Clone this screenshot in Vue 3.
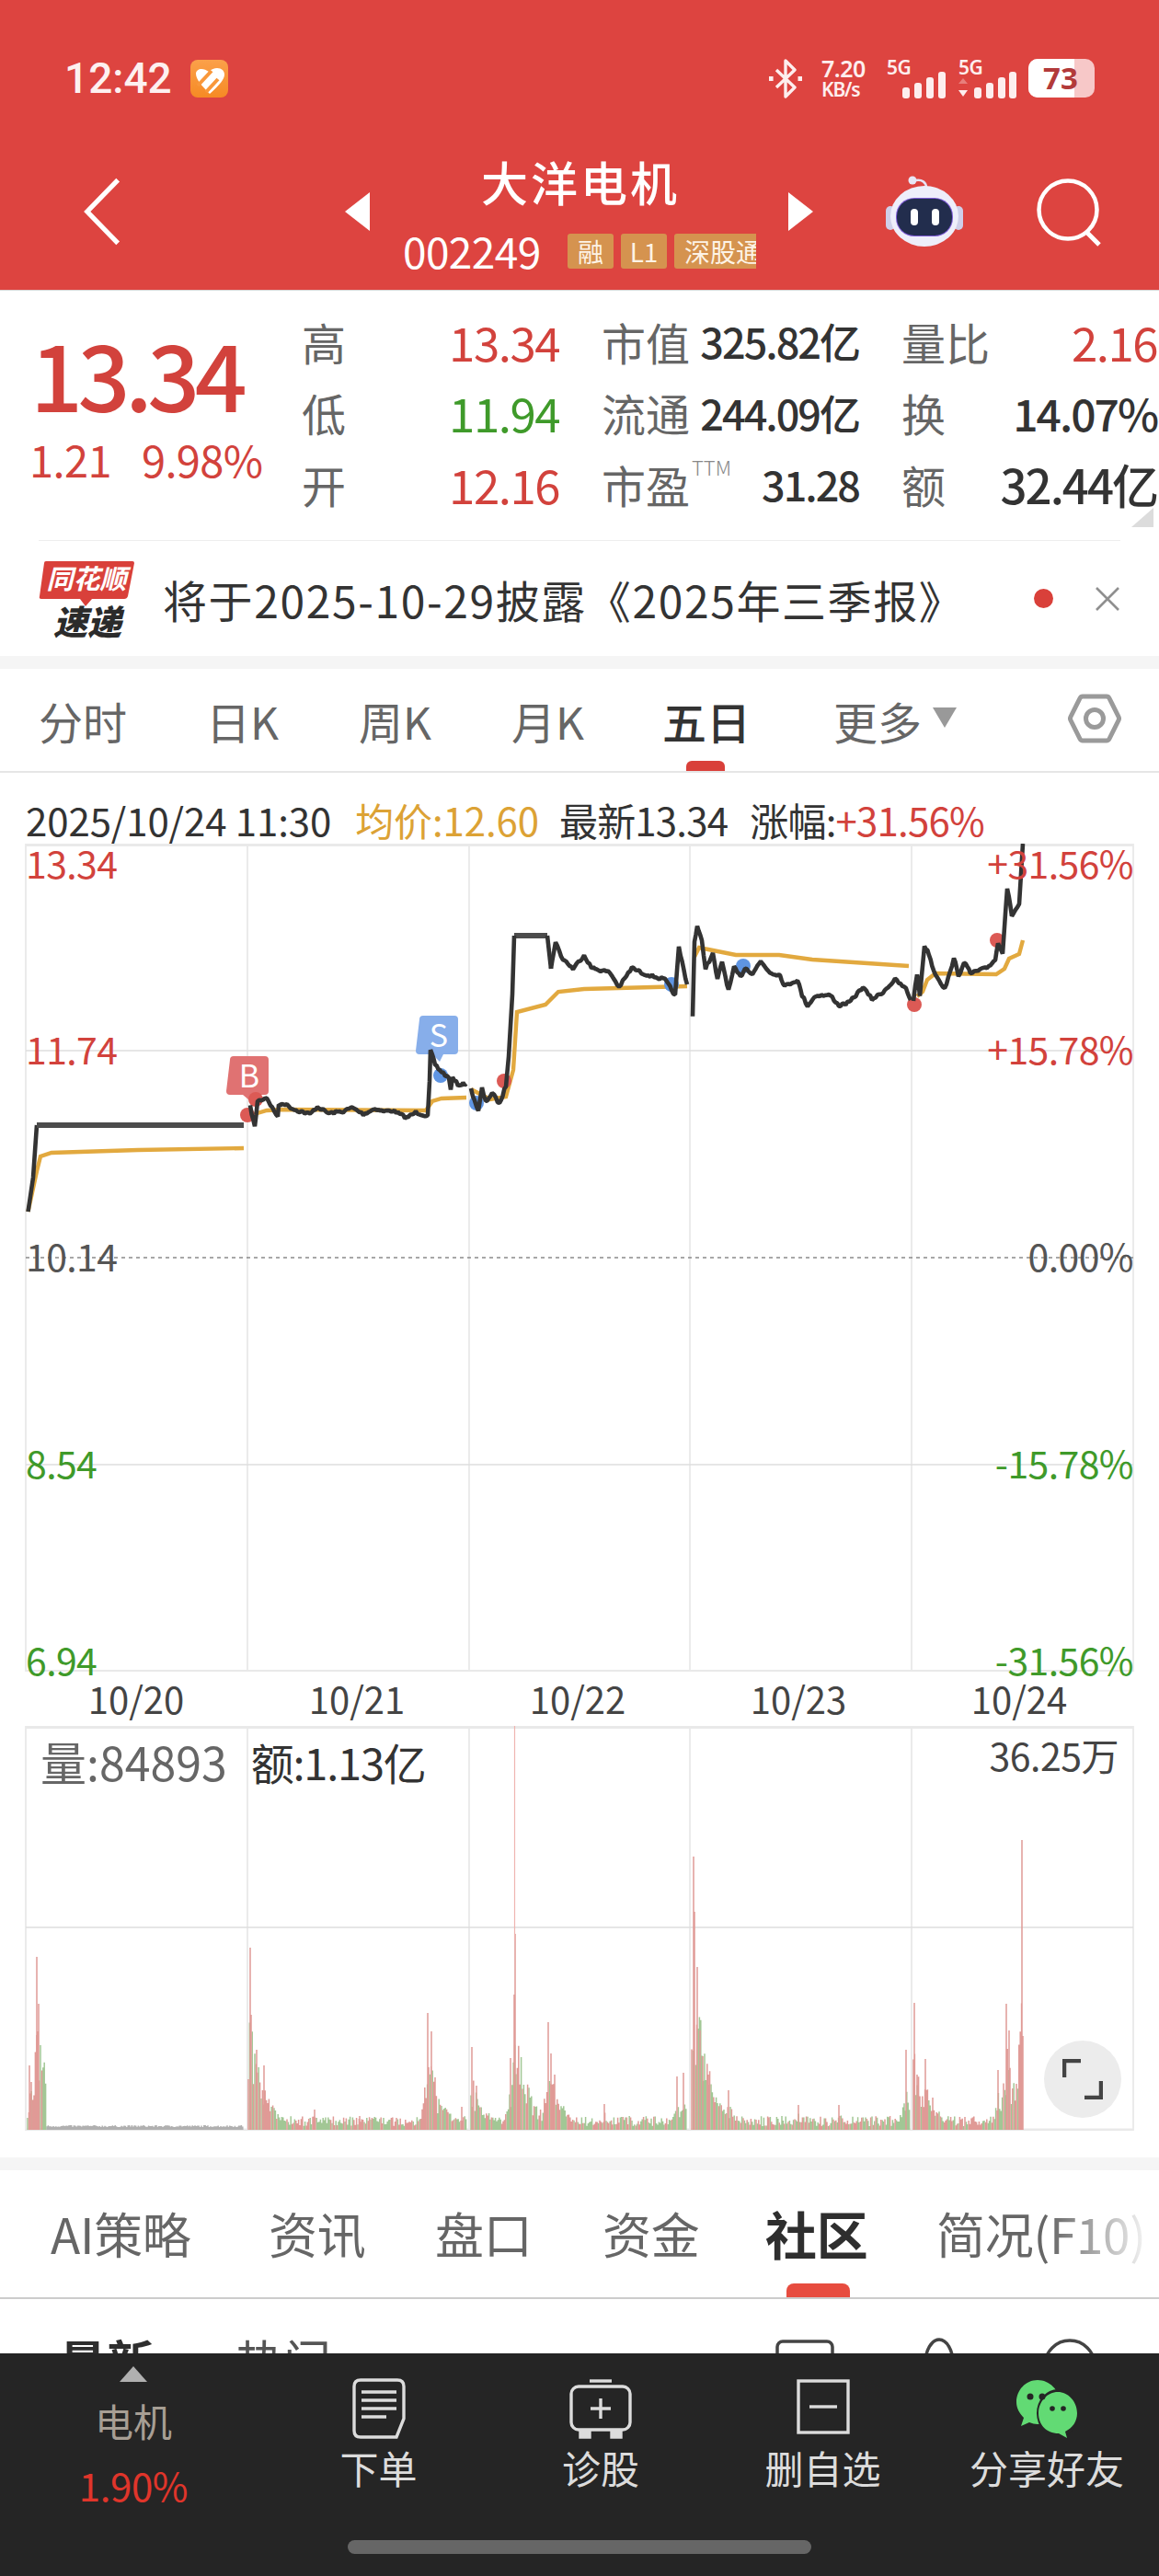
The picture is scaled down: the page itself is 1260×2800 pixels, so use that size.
<script setup>
// seeded noise so the chart looks the same on every render
let seed = 7
function rnd() {
  seed = (seed * 16807) % 2147483647
  return seed / 2147483647
}

function line(points) {
  return 'M' + points.map((p) => p[0].toFixed(1) + ' ' + p[1].toFixed(1)).join('L')
}

// walks between key points and adds a small wobble, like minute ticks
function noisy(points, amp = 1.6) {
  const out = []
  for (let i = 0; i < points.length - 1; i++) {
    const [x0, y0] = points[i]
    const [x1, y1] = points[i + 1]
    const steps = Math.max(1, Math.round((x1 - x0) / 2))
    for (let s = 0; s < steps; s++) {
      const t = s / steps
      out.push([x0 + (x1 - x0) * t, y0 + (y1 - y0) * t + (rnd() - 0.5) * amp * 2])
    }
  }
  out.push(points[points.length - 1])
  return line(out)
}

const priceDays = [
  [[272,1203],[277,1225],[280,1197],[290,1193],[298,1208],[302,1213],[303,1202],[308,1199],[320,1206],[337,1211],[345,1203],[357,1210],[373,1208],[383,1204],[395,1211],[408,1205],[417,1208],[427,1207],[442,1215],[452,1209],[465,1213],[467,1177],[468,1142],[473,1157],[478,1163],[488,1172],[490,1183],[492,1172],[498,1179],[507,1178]],
  [[512,1184],[520,1208],[524,1183],[528,1198],[535,1188],[543,1200],[550,1180],[553,1147],[557,1080],[559,1017]],
  [[599,1053],[604,1023],[610,1040],[623,1053],[635,1038],[643,1052],[663,1057],[673,1073],[687,1052],[699,1058],[723,1065],[734,1082],[738,1030],[747,1070]],
  [[753,1105],[755,1023],[758,1007],[763,1023],[767,1052],[775,1037],[780,1065],[785,1045],[792,1077],[798,1052],[805,1062],[810,1052],[818,1058],[827,1045],[837,1057],[848,1060],[853,1072],[867,1065],[872,1082],[878,1093],[887,1082],[903,1082],[912,1093],[923,1090],[938,1073],[948,1086],[958,1080],[973,1065],[985,1075],[990,1087]],
  [[993,1087],[997,1058],[1000,1082],[1005,1028],[1010,1037],[1015,1055],[1027,1075],[1033,1057],[1037,1040],[1042,1062],[1048,1045],[1055,1058],[1073,1052],[1082,1043],[1085,1025],[1090,1035],[1095,965],[1100,995],[1108,983],[1110,950],[1112,917]]
]
const pricePaths = priceDays.map((d) => noisy(d))

const avgPaths = [
  [[30.5,1317],[40,1273],[44,1257],[56,1253],[150,1250],[265,1248]],
  [[273,1212],[290,1207],[307,1206],[463,1207],[470,1197],[480,1194],[507,1193]],
  [[512,1184],[533,1195],[550,1192],[558,1163],[562,1100],[593,1092],[603,1082],[607,1078],[635,1075],[747,1072]],
  [[755,1040],[760,1030],[770,1032],[800,1038],[847,1038],[883,1043],[988,1050]],
  [[997,1083],[1003,1078],[1008,1065],[1017,1058],[1083,1059],[1092,1053],[1097,1042],[1108,1037],[1112,1022]]
].map(line)

const redDots = [[269,1212],[278,1195],[548,1175],[994,1092],[1084,1022]]
const blueDots = [[479,1169],[518,1199],[730,1070],[808,1050]]

// volume pane: [x, top of the bar]
const volDays = [
  { from: 30, to: 265, flat: 50, spikes: [[32,2245],[34,2263],[40,2127],[42,2178]] },
  { from: 270, to: 507, spikes: [[272,2117],[273,2190],[279,2228],[287,2245],[342,2293],[391,2300],[465,2188],[469,2208],[502,2290]] },
  { from: 512, to: 747, spikes: [[513,2225],[518,2267],[555,2237],[559,2168],[560,2102],[596,2198],[599,2232],[603,2255],[657,2287],[736,2257],[743,2253]] },
  { from: 752, to: 989, spikes: [[754,2018],[755,2078],[758,2138],[761,2207],[764,2235],[770,2255],[792,2272],[868,2288],[912,2288],[985,2228]] },
  { from: 993, to: 1112, spikes: [[994,2177],[997,2255],[1006,2238],[1014,2280],[1085,2250],[1094,2178],[1097,2207],[1105,2265],[1111,2000],[1112,2213]] }
]

const BASE = 2315
const volBars = { red: '', green: '', gray: '' }
for (const day of volDays) {
  for (let x = day.from; x <= day.to; x += 1.4) {
    let h = 4 + rnd() * 11
    if (day.flat && x > day.flat) {
      h = 3 + rnd() * 2
      volBars.gray += `M${x.toFixed(1)} ${BASE}V${(BASE - h).toFixed(1)}`
      continue
    }
    for (const [sx, top] of day.spikes) {
      const dx = x - sx
      const tau = dx > 0 ? 15 : 5
      const v = (BASE - top) * Math.exp(-Math.abs(dx) / tau) * (0.25 + rnd() * 0.45)
      if (v > h) h = v
    }
    const key = rnd() > 0.5 ? 'red' : 'green'
    volBars[key] += `M${x.toFixed(1)} ${BASE}V${(BASE - h).toFixed(1)}`
  }
  for (const [sx, top] of day.spikes) {
    volBars.red += `M${sx} ${BASE}V${top}`
  }
}

const gridX = [28, 269, 510, 750, 991, 1232]

const leftAxis = [
  { text: '13.34', cls: 'up', y: 20 },
  { text: '11.74', cls: 'up', y: 222 },
  { text: '10.14', cls: 'flat', y: 447 },
  { text: '8.54', cls: 'down', y: 672 },
  { text: '6.94', cls: 'down', y: 886 }
]
const rightAxis = [
  { text: '+31.56%', cls: 'up', y: 20 },
  { text: '+15.78%', cls: 'up', y: 222 },
  { text: '0.00%', cls: 'flat', y: 447 },
  { text: '-15.78%', cls: 'down', y: 672 },
  { text: '-31.56%', cls: 'down', y: 886 }
]

const stats = [
  { label: '高', value: '13.34', cls: 'up' },
  { label: '市值', value: '325.82亿', cls: 'dark tight' },
  { label: '量比', value: '2.16', cls: 'up' },
  { label: '低', value: '11.94', cls: 'down' },
  { label: '流通', value: '244.09亿', cls: 'dark tight' },
  { label: '换', value: '14.07%', cls: 'dark narrow' },
  { label: '开', value: '12.16', cls: 'up' },
  { label: '市盈', sup: 'TTM', value: '31.28', cls: 'dark tight' },
  { label: '额', value: '32.44亿', cls: 'dark' }
]

const periods = [
  { name: '分时' },
  { name: '日K' },
  { name: '周K' },
  { name: '月K' },
  { name: '五日', active: true },
  { name: '更多', more: true }
]
const dates = ['10/20', '10/21', '10/22', '10/23', '10/24']
const sections = [
  { name: 'AI策略' },
  { name: '资讯' },
  { name: '盘口' },
  { name: '资金' },
  { name: '社区', active: true },
  { name: '简况(F10)' }
]
</script>

<template>
  <div class="phone">
    <header class="top">
      <div class="status">
        <span class="clock">12:42</span>
        <svg class="app-badge" viewBox="0 0 41 41">
          <defs>
            <linearGradient id="badge" x1="0" y1="0" x2="0" y2="1">
              <stop offset="0" stop-color="#fba04a" />
              <stop offset="1" stop-color="#f68a24" />
            </linearGradient>
          </defs>
          <rect width="41" height="41" rx="8" fill="url(#badge)" />
          <path d="M6 15c0-3 3-5 6-5 3 0 5 1 8 3 3-3 6-4 9-4 5 0 8 3 8 7 0 5-5 11-16 21C12 28 6 21 6 15z" fill="#fff" />
          <path d="M8 28l15-16M17 35l13-14" fill="none" stroke="#f9973a" stroke-width="4" />
        </svg>
        <div class="status-right">
          <svg class="bt" viewBox="0 0 36 43" fill="none" stroke="#fdeeee" stroke-width="3.4">
            <path d="M8 12l20 19-10 10V2l10 10L8 31" stroke-linejoin="round" />
            <path d="M2 21.5h.1M34 21.5h.1" stroke-width="5" stroke-linecap="square" />
          </svg>
          <div class="speed"><span>7.20</span><small>KB/s</small></div>
          <div class="sig">
            <span class="five-g">5G</span>
            <svg width="47" height="29" viewBox="0 0 47 29" fill="#fdeeee">
              <rect x="0" y="17" width="8" height="12" rx="3" />
              <rect x="13" y="12" width="8" height="17" rx="3" />
              <rect x="26" y="6" width="8" height="23" rx="3" />
              <rect x="39" y="0" width="8" height="29" rx="3" />
            </svg>
          </div>
          <div class="sig sig-two">
            <span class="five-g">5G</span>
            <svg width="63" height="29" viewBox="0 0 63 29" fill="#fdeeee">
              <path d="M0 13l5-6 5 6z" opacity=".35" />
              <path d="M0 20l5 7 5-7z" />
              <rect x="17" y="17" width="8" height="12" rx="3" />
              <rect x="30" y="12" width="8" height="17" rx="3" />
              <rect x="43" y="6" width="8" height="23" rx="3" />
              <rect x="55" y="0" width="8" height="29" rx="3" />
            </svg>
          </div>
          <div class="battery">
            <span class="battery-fill" />
            <span class="battery-num">73</span>
          </div>
        </div>
      </div>

      <nav class="title-bar">
        <svg class="back" viewBox="0 0 44 76" fill="none" stroke="#fff" stroke-width="5.5">
          <path d="M40 2L5 38l35 36" />
        </svg>
        <span class="tri tri-left" />
        <div class="stock">
          <div class="stock-name">大洋电机</div>
          <div class="stock-meta">
            <span class="code">002249</span>
            <span class="tag">融</span>
            <span class="tag">L1</span>
            <span class="tag tag-cut">深股通</span>
          </div>
        </div>
        <span class="tri tri-right" />
        <svg class="robot" viewBox="0 0 84 77">
          <path d="M44 13c0-6-5-9-11-8" fill="none" stroke="#e6e3f5" stroke-width="2.5" />
          <circle cx="29" cy="5" r="4.5" fill="#e8e6f6" />
          <rect x="0" y="33" width="10" height="26" rx="5" fill="#cfcfe9" />
          <rect x="74" y="33" width="10" height="26" rx="5" fill="#cfcfe9" />
          <ellipse cx="42" cy="44" rx="37" ry="33" fill="#eeeefa" />
          <rect x="11" y="24" width="62" height="42" rx="20" fill="#7f5cd8" />
          <rect x="12" y="25" width="60" height="40" rx="19" fill="#222d4d" />
          <rect x="27" y="36" width="8" height="18" rx="4" fill="#fff" />
          <rect x="50" y="36" width="8" height="18" rx="4" fill="#fff" />
        </svg>
        <svg class="search" viewBox="0 0 76 76" fill="none" stroke="#fff" stroke-width="4.5">
          <circle cx="34" cy="34" r="31.5" />
          <path d="M55 59l13 13" stroke-width="5" />
        </svg>
      </nav>
    </header>

    <section class="quote">
      <div class="price-box">
        <div class="price">13.34</div>
        <div class="change"><span>1.21</span><span>9.98%</span></div>
      </div>
      <div class="stats">
        <div v-for="s in stats" :key="s.label" class="stat">
          <span class="stat-label">{{ s.label }}<sup v-if="s.sup">{{ s.sup }}</sup></span>
          <span class="stat-value" :class="s.cls">{{ s.value }}</span>
        </div>
      </div>
      <span class="corner" />
    </section>

    <section class="news">
      <svg class="logo" viewBox="0 0 104 86">
        <path d="M8 2h94q2 0 2 2l-7 36q-1 3-4 3H58l-7 8-6-8H3q-3 0-2-3L6 4q0-2 2-2z" fill="#d9403a" />
        <text x="52" y="32" class="logo-top" text-anchor="middle">同花顺</text>
        <text x="53" y="82" class="logo-bottom" text-anchor="middle">速递</text>
      </svg>
      <p class="news-text">将于2025-10-29披露《2025年三季报》</p>
      <span class="news-dot" />
      <svg class="news-close" viewBox="0 0 28 28" fill="none" stroke="#8f8f8f" stroke-width="2.6">
        <path d="M2 2l24 24M26 2L2 26" />
      </svg>
    </section>

    <div class="band" />

    <div class="periods">
      <div v-for="p in periods" :key="p.name" class="period" :class="{ active: p.active }">
        {{ p.name }}
        <span v-if="p.more" class="more-arrow" />
        <span v-if="p.active" class="period-bar" />
      </div>
      <svg class="hex" viewBox="0 0 58 54" fill="none" stroke="#9a9a9a" stroke-width="5">
        <path d="M16 3h26q2 0 3 2l10 20q1 2 0 4L45 49q-1 2-3 2H16q-2 0-3-2L3 29q-1-2 0-4L13 5q1-2 3-2z" />
        <circle cx="29" cy="27" r="9.5" />
      </svg>
    </div>

    <div class="readout">
      <span class="stamp">2025/10/24 11:30</span>
      <span class="avg">均价:12.60</span>
      <span class="latest">最新13.34</span>
      <span class="rise">涨幅:<em>+31.56%</em></span>
    </div>

    <div class="chart">
      <svg class="plot" viewBox="0 917 1260 900">
        <path
          v-for="x in gridX"
          :key="x"
          :d="`M${x} 917V1817`"
          stroke="#e4e4e4"
          stroke-width="1.5"
        />
        <path d="M28 918.5H1232" stroke="#e9e9e9" stroke-width="3" />
        <path d="M28 1142H1232M28 1592H1232" stroke="#dedede" stroke-width="1.5" />
        <path d="M28 1816H1232" stroke="#e9e9e9" stroke-width="2" />
        <path d="M28 1367H1232" stroke="#8a8a8a" stroke-width="1.6" stroke-dasharray="4 4" />

        <g fill="none" stroke="#e2a93f" stroke-width="4.4">
          <path v-for="(d, i) in avgPaths" :key="i" :d="d" />
        </g>

        <path d="M250 1152q0-4 4-4h34q4 0 4 4v34q0 4-4 4h-8l-4 10-12-10h-14q-4 0-4-4z" fill="#e07272" />
        <path d="M456 1108q0-4 4-4h34q4 0 4 4v34q0 4-4 4h-12l-4 8-8-8h-14q-4 0-4-4z" fill="#87aeea" />
        <text x="271" y="1182" class="mark-text" text-anchor="middle">B</text>
        <text x="477" y="1138" class="mark-text" text-anchor="middle">S</text>

        <circle v-for="d in redDots" :key="d[0]" :cx="d[0]" :cy="d[1]" r="8" fill="#dc5a55" />
        <circle v-for="d in blueDots" :key="d[0]" :cx="d[0]" :cy="d[1]" r="8" fill="#5f95e3" />

        <path d="M30.5 1317L36 1280L40 1223" fill="none" stroke="#333" stroke-width="4.6" />
        <path d="M40 1223H265" fill="none" stroke="#4c4c4c" stroke-width="6" />
        <path d="M559 1017H595" fill="none" stroke="#4c4c4c" stroke-width="6" />
        <path d="M595 1017L599 1053" fill="none" stroke="#333" stroke-width="4.6" />
        <g fill="none" stroke="#333" stroke-width="4.6" stroke-linejoin="bevel">
          <path v-for="(d, i) in pricePaths" :key="i" :d="d" />
        </g>
      </svg>
      <span
        v-for="a in leftAxis"
        :key="a.text"
        class="axis axis-left"
        :class="a.cls"
        :style="{ top: a.y + 'px' }"
      >{{ a.text }}</span>
      <span
        v-for="a in rightAxis"
        :key="a.text"
        class="axis axis-right"
        :class="a.cls"
        :style="{ top: a.y + 'px' }"
      >{{ a.text }}</span>
    </div>

    <div class="dates">
      <span v-for="d in dates" :key="d">{{ d }}</span>
    </div>

    <div class="volume">
      <svg class="plot" viewBox="0 1876 1260 440">
        <path
          v-for="x in gridX"
          :key="x"
          :d="`M${x} 1876V2316`"
          stroke="#e4e4e4"
          stroke-width="1.5"
        />
        <path d="M28 1877.5H1232M28 2315H1232" stroke="#e9e9e9" stroke-width="3" />
        <path d="M28 2095H1232" stroke="#dedede" stroke-width="1.5" />
        <g fill="none" stroke-width="1.5">
          <path :d="volBars.gray" stroke="#b0b0b0" />
          <path :d="volBars.green" stroke="#a2c795" />
          <path :d="volBars.red" stroke="#e09a96" />
        </g>
        <path d="M559.5 1876V2110" stroke="#efb4b1" stroke-width="1.2" />
      </svg>
      <div class="vol-info">
        <span class="vol-amount">量:84893</span>
        <span class="vol-money">额:1.13亿</span>
        <span class="vol-max">36.25万</span>
      </div>
      <button class="expand">
        <svg width="44" height="44" viewBox="0 0 44 44" fill="none" stroke="#444" stroke-width="4.5">
          <path d="M2 20V2h18M42 24v18H24" />
        </svg>
      </button>
    </div>

    <div class="band band-two" />

    <div class="sections">
      <div v-for="t in sections" :key="t.name" class="section-tab" :class="{ active: t.active }">
        {{ t.name }}
        <span v-if="t.active" class="section-bar" />
      </div>
      <span class="fade" />
    </div>

    <div class="feed">
      <span class="feed-tab feed-on">最新</span>
      <span class="feed-tab">热门</span>
      <svg class="feed-icons" width="350" height="60" viewBox="0 0 350 60" fill="none" stroke="#444" stroke-width="3.5">
        <rect x="2" y="6" width="60" height="50" rx="6" />
        <ellipse cx="178" cy="30" rx="15" ry="26" />
        <circle cx="320" cy="32" r="27" />
      </svg>
    </div>

    <footer class="dock">
      <div class="dock-row">
        <div class="dock-item dock-sector">
          <span class="sector-arrow" />
          <span class="sector-name">电机</span>
          <span class="sector-pct">1.90%</span>
        </div>
        <div class="dock-item">
          <svg class="dock-icon" width="58" height="66" viewBox="0 0 58 66" fill="none" stroke="#dcdcdc" stroke-width="3.4">
            <path d="M9 2h40q7 0 7 7v35l-8 20H9q-7 0-7-7V9q0-7 7-7z" />
            <path d="M10 15h38M10 24h38M10 33h38M10 42h27" />
          </svg>
          <span>下单</span>
        </div>
        <div class="dock-item">
          <svg class="dock-icon" width="68" height="66" viewBox="0 0 68 66" fill="none" stroke="#dcdcdc" stroke-width="3.4">
            <path d="M22 3h24" />
            <rect x="2" y="9" width="64" height="47" rx="8" />
            <path d="M34 22v22M23 33h22" />
            <path d="M12 57v7h10v-7M46 57v7h10v-7" fill="#dcdcdc" />
          </svg>
          <span>诊股</span>
        </div>
        <div class="dock-item">
          <svg class="dock-icon" width="58" height="66" viewBox="0 0 58 66" fill="none" stroke="#dcdcdc" stroke-width="3.4">
            <rect x="2" y="3" width="54" height="56" />
            <path d="M14 31h30" />
          </svg>
          <span>删自选</span>
        </div>
        <div class="dock-item">
          <svg class="dock-icon" width="68" height="66" viewBox="0 0 68 66">
            <path d="M24 2c13 0 24 11 24 24s-11 24-24 24c-3 0-6-1-9-2l-9 4 3-9C4 38 1 32 1 26 1 13 11 2 24 2z" fill="#62da74" />
            <ellipse cx="46" cy="38" rx="23" ry="26" fill="#252525" />
            <path d="M46 15c11 0 21 10 21 23 0 9-5 16-13 20l2 7-9-5C33 60 25 50 25 38c0-13 10-23 21-23z" fill="#62da74" />
            <circle cx="16" cy="20" r="3.5" fill="#252525" />
            <circle cx="29" cy="20" r="3.5" fill="#252525" />
            <circle cx="40" cy="33" r="2.8" fill="#252525" />
            <circle cx="52" cy="33" r="2.8" fill="#252525" />
          </svg>
          <span>分享好友</span>
        </div>
      </div>
      <span class="home-bar" />
    </footer>
  </div>
</template>

<style>
html,
body {
  margin: 0;
  background: #fff;
}
</style>

<style scoped>
.phone {
  position: relative;
  width: 1260px;
  height: 2800px;
  overflow: hidden;
  background: #fff;
  font-family: "Noto Sans CJK SC", "Noto Sans", sans-serif;
  font-weight: 400;
  color: #333;
}

.up { color: #d2423c; }
.down { color: #3f9a2a; }
.flat { color: #555; }
.dark { color: #333; }

/* header */
.top {
  height: 316px;
  box-sizing: border-box;
  padding-top: 62px;
  background: #dd4440;
  border-bottom: 1px solid #d8d8d8;
  color: #fff;
}
.status {
  display: flex;
  align-items: center;
  height: 46px;
  padding: 0 70px;
}
.clock {
  font-family: Roboto, sans-serif;
  font-size: 46px;
  font-weight: 500;
  line-height: 46px;
  color: #fdf0f0;
}
.app-badge {
  width: 41px;
  height: 41px;
  margin-left: 20px;
}
.status-right {
  display: flex;
  align-items: center;
  margin-left: auto;
  height: 46px;
}
.bt {
  width: 36px;
  height: 43px;
}
.speed {
  display: flex;
  flex-direction: column;
  margin-left: 21px;
  width: 52px;
  font-family: "Noto Sans", sans-serif;
  font-weight: 600;
  color: #fdeeee;
  line-height: 1;
}
.speed span { font-size: 25px; line-height: 24px; letter-spacing: -0.5px; }
.speed small { font-size: 21px; line-height: 22px; letter-spacing: -1.2px; }
.sig {
  position: relative;
  width: 64px;
  height: 44px;
  margin-left: 19px;
  display: flex;
  justify-content: flex-end;
  align-items: flex-end;
}
.sig-two {
  width: 63px;
  margin-left: 14px;
}
.five-g {
  position: absolute;
  left: 0;
  top: 0;
  font-family: "Noto Sans", sans-serif;
  font-size: 21px;
  line-height: 20px;
  font-weight: 600;
  letter-spacing: -0.5px;
  color: #fdeeee;
}
.battery {
  position: relative;
  width: 72px;
  height: 42px;
  margin-left: 13px;
  border-radius: 10px;
  overflow: hidden;
  background: #f7c8c8;
  text-align: center;
}
.battery-fill {
  position: absolute;
  left: 0;
  top: 0;
  bottom: 0;
  width: 50px;
  background: #fff;
}
.battery-num {
  position: relative;
  left: -1px;
  font-family: "Noto Sans", sans-serif;
  font-size: 33px;
  font-weight: 700;
  line-height: 42px;
  color: #b23a3a;
}

.title-bar {
  display: flex;
  align-items: center;
  height: 125px;
  margin-top: 59px;
  padding-left: 90px;
}
.back {
  width: 42px;
  height: 76px;
}
.tri {
  width: 0;
  height: 0;
  border-top: 21px solid transparent;
  border-bottom: 21px solid transparent;
}
.tri-left {
  margin-left: 243px;
  border-right: 27px solid #fff;
}
.tri-right {
  border-left: 27px solid #fff;
}
.stock {
  width: 382px;
  margin: 0 35px 0 38px;
}
.stock-name {
  text-align: center;
  font-size: 51px;
  font-weight: 500;
  line-height: 60px;
  letter-spacing: 3px;
}
.stock-meta {
  display: flex;
  align-items: center;
  height: 38px;
  margin-top: 27px;
}
.code {
  width: 177px;
  margin-left: -2px;
  margin-right: 2px;
  margin-top: -3px;
  font-size: 46px;
  line-height: 38px;
  letter-spacing: -0.6px;
}
.tag {
  width: 50px;
  height: 38px;
  margin-right: 8px;
  background: #d5934f;
  border-radius: 3px;
  text-align: center;
  font-size: 28px;
  line-height: 38px;
  color: #fdf3e6;
}
.tag-cut {
  width: 89px;
  margin-right: 0;
  overflow: hidden;
  border-radius: 3px 0 0 3px;
  white-space: nowrap;
  text-align: left;
  padding-left: 11px;
  box-sizing: border-box;
}
.robot {
  width: 84px;
  height: 77px;
  margin-left: 79px;
}
.search {
  width: 76px;
  height: 76px;
  margin-left: 80px;
  margin-top: 4px;
}

/* quote */
.quote {
  position: relative;
  display: flex;
  height: 271px;
  box-sizing: border-box;
  padding-top: 16px;
}
.price-box {
  width: 328px;
  flex: none;
}
.price {
  margin: 18px 0 0 33px;
  font-size: 100px;
  font-weight: 500;
  line-height: 110px;
  letter-spacing: -5.5px;
  color: #d2423c;
}
.change {
  display: flex;
  gap: 33px;
  margin: 9px 0 0 32px;
  font-size: 47px;
  line-height: 60px;
  letter-spacing: -0.6px;
  color: #d2423c;
}
.stats {
  display: grid;
  grid-template-columns: 280px 280px 278px;
  grid-auto-rows: 77.5px;
  column-gap: 46px;
}
.stat {
  display: flex;
  align-items: center;
  justify-content: space-between;
  white-space: nowrap;
}
.stat-label {
  font-size: 48px;
  color: #666;
  display: flex;
  align-items: flex-start;
}
.stat-label sup {
  font-size: 22px;
  line-height: 32px;
  font-weight: 300;
  color: #888;
  margin-left: 2px;
}
.stat-value {
  font-size: 51px;
  letter-spacing: -1.5px;
}
.stat-value.dark {
  font-weight: 500;
  letter-spacing: -2px;
}
.stat-value.tight {
  font-size: 45px;
}
.stat-value.narrow {
  font-size: 48px;
}
.corner {
  position: absolute;
  right: 6px;
  bottom: 14px;
  width: 0;
  height: 0;
  border-left: 24px solid transparent;
  border-bottom: 21px solid #dcdcdc;
}

/* news */
.news {
  display: flex;
  align-items: center;
  height: 126px;
  margin: 0 42px;
  border-top: 1px solid #eeeeee;
  box-sizing: border-box;
}
.logo {
  width: 104px;
  height: 86px;
  flex: none;
}
.logo-top {
  font-size: 29px;
  font-weight: 700;
  font-style: italic;
  fill: #fff;
}
.logo-bottom {
  font-size: 37px;
  font-weight: 900;
  font-style: italic;
  fill: #2b2b2b;
}
.news-text {
  margin: 0 0 0 31px;
  font-size: 48px;
  letter-spacing: 1.6px;
  white-space: nowrap;
  color: #333;
}
.news-dot {
  width: 21px;
  height: 21px;
  margin-left: auto;
  border-radius: 50%;
  background: #d9403a;
}
.news-close {
  width: 28px;
  height: 28px;
  margin-left: 45px;
}

.band {
  height: 14px;
  background: #f5f5f5;
}

/* period tabs */
.periods {
  position: relative;
  display: grid;
  grid-template-columns: 182px 166px 166px 164px 186px 255px 58px;
  align-items: center;
  height: 113px;
  box-sizing: border-box;
  padding-left: 42px;
  border-bottom: 2px solid #e6e6e6;
}
.period {
  position: relative;
  display: flex;
  align-items: center;
  height: 100%;
  font-size: 48px;
  color: #666;
}
.period.active {
  font-weight: 500;
  color: #333;
}
.more-arrow {
  width: 0;
  height: 0;
  margin-left: 12px;
  margin-top: -6px;
  border-left: 13px solid transparent;
  border-right: 13px solid transparent;
  border-top: 22px solid #999;
}
.period-bar {
  position: absolute;
  left: 26px;
  bottom: 0;
  width: 42px;
  height: 11px;
  border-radius: 6px 6px 0 0;
  background: #d9403a;
}
.hex {
  width: 58px;
  height: 54px;
  margin-top: -3px;
}

.readout {
  display: flex;
  align-items: center;
  height: 77px;
  box-sizing: border-box;
  padding: 24px 0 0 28px;
  font-size: 42px;
  letter-spacing: -0.1px;
  color: #333;
  white-space: nowrap;
}
.stamp { margin-right: 26px; }
.avg { margin-right: 22px; color: #dca235; }
.latest { margin-right: 24px; letter-spacing: -0.8px; }
.rise { letter-spacing: -0.8px; }
.rise em {
  font-style: normal;
  color: #d2423c;
}

/* charts */
.chart {
  position: relative;
  height: 900px;
}
.plot {
  display: block;
  width: 1260px;
  height: 100%;
}
.mark-text {
  font-size: 34px;
  fill: #fff;
}
.axis {
  position: absolute;
  transform: translateY(-50%);
  font-size: 41px;
  line-height: 46px;
  letter-spacing: -0.6px;
}
.axis-left { left: 28px; }
.axis-right { right: 28px; }

.dates {
  display: grid;
  grid-template-columns: repeat(5, 240px);
  justify-items: center;
  align-items: center;
  height: 59px;
  box-sizing: border-box;
  padding: 0 0 2px 28px;
  font-size: 40px;
  color: #444;
}

.volume {
  position: relative;
  height: 440px;
}
.vol-info {
  position: absolute;
  top: 12px;
  left: 44px;
  right: 44px;
  display: flex;
  align-items: center;
  height: 52px;
}
.vol-amount {
  font-size: 50px;
  color: #666;
}
.vol-money {
  margin-left: 26px;
  font-size: 47px;
  letter-spacing: -1.2px;
  color: #333;
}
.vol-max {
  margin-left: auto;
  font-size: 41px;
  letter-spacing: -0.5px;
  color: #444;
  margin-top: -14px;
}
.expand {
  position: absolute;
  left: 1135px;
  top: 342px;
  width: 84px;
  height: 84px;
  padding: 0;
  display: flex;
  align-items: center;
  justify-content: center;
  border: 0;
  border-radius: 50%;
  background: #ececec;
}

.band-two {
  margin-top: 29px;
}

/* section tabs */
.sections {
  position: relative;
  display: grid;
  grid-template-columns: 237px 181px 182px 177px 186px 1fr;
  height: 140px;
  box-sizing: border-box;
  padding-left: 55px;
  border-bottom: 2px solid #cccccc;
  overflow: hidden;
}
.section-tab {
  position: relative;
  display: flex;
  align-items: center;
  padding-bottom: 3px;
  font-size: 53px;
  letter-spacing: -0.3px;
  color: #666;
  white-space: nowrap;
}
.section-tab.active {
  font-size: 56px;
  font-weight: 700;
  color: #2e2e2e;
}
.section-bar {
  position: absolute;
  left: 23px;
  bottom: 0;
  width: 69px;
  height: 15px;
  border-radius: 8px 8px 0 0;
  background: #e74c3f;
}
.fade {
  position: absolute;
  right: 0;
  top: 0;
  bottom: 0;
  width: 120px;
  background: linear-gradient(90deg, rgba(255, 255, 255, 0), #fff 95%);
}

.feed {
  position: relative;
  display: flex;
  height: 59px;
  overflow: hidden;
  padding-left: 64px;
}
.feed-tab {
  margin-top: 37px;
  margin-right: 88px;
  font-size: 52px;
  line-height: 60px;
  color: #555;
}
.feed-on {
  font-weight: 700;
  color: #2e2e2e;
}
.feed-icons {
  position: absolute;
  left: 843px;
  top: 40px;
}

/* bottom dock */
.dock {
  display: flex;
  flex-direction: column;
  align-items: center;
  height: 242px;
  background: #252525;
}
.dock-row {
  display: grid;
  grid-template-columns: 290px 243px 240px 243px 244px;
  width: 100%;
  height: 203px;
}
.dock-item {
  display: flex;
  flex-direction: column;
  align-items: center;
  padding-top: 27px;
  font-size: 42px;
  line-height: 50px;
  color: #dcdcdc;
  white-space: nowrap;
}
.dock-icon {
  margin-bottom: 6px;
}
.dock-sector {
  padding-top: 14px;
}
.sector-arrow {
  width: 0;
  height: 0;
  border-left: 15px solid transparent;
  border-right: 15px solid transparent;
  border-bottom: 17px solid #b0b0b0;
}
.sector-name {
  margin-top: 17px;
  color: #a79e94;
}
.sector-pct {
  margin-top: 20px;
  letter-spacing: -0.4px;
  color: #e0352b;
}
.home-bar {
  width: 504px;
  height: 15px;
  border-radius: 8px;
  background: #666;
}
</style>
